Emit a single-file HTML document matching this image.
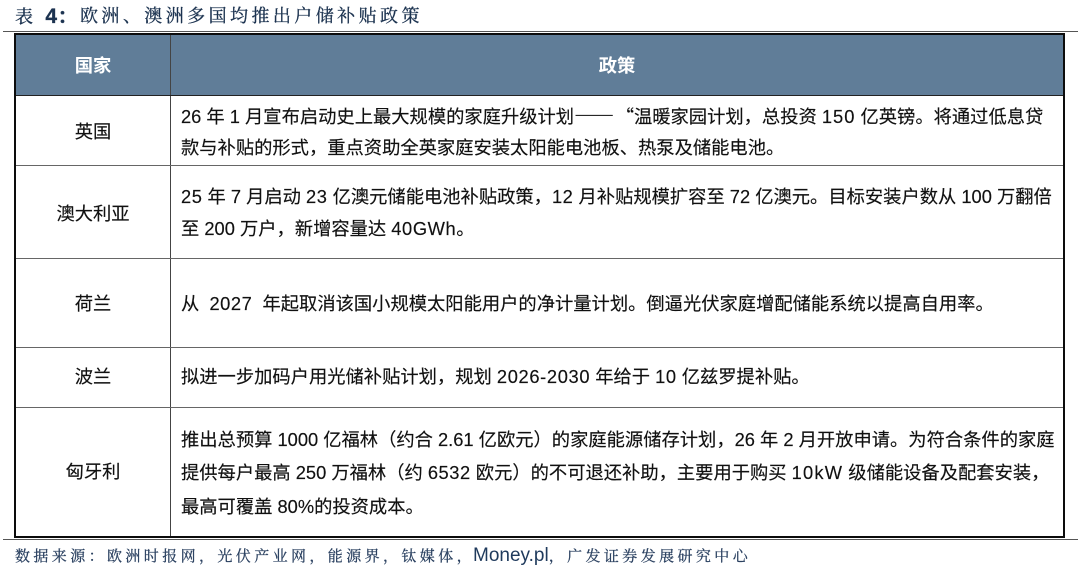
<!DOCTYPE html>
<html lang="zh"><head><meta charset="utf-8"><style>
html,body{margin:0;padding:0;background:#fff}
#p{position:relative;width:1080px;height:573px;overflow:hidden;background:#fff}
.r{position:absolute;box-sizing:border-box}
.t{position:absolute;white-space:nowrap;font-family:"Liberation Sans","Noto Sans CJK SC",sans-serif;font-size:18.3px;line-height:26px;height:26px;color:#111;-webkit-text-stroke:0.15px #111}
.c{text-align:center;width:154px;left:16px}
.s{position:absolute;white-space:nowrap;font-family:"Liberation Serif","Noto Serif CJK SC",serif;color:#1c3350;-webkit-text-stroke:0.3px #1c3350}
.z{font-family:"Noto Sans CJK SC",sans-serif}
.w{color:#fff;font-weight:700;-webkit-text-stroke:0}
i{font-style:normal;letter-spacing:.55px}
</style></head><body><div id="p">
<div class="s" style="left:15px;top:2px;font-size:18px;line-height:28px;letter-spacing:3.4px">表 <b style="font-family:'Liberation Sans',sans-serif;letter-spacing:0;font-size:21px;margin-left:1px">4</b><b class="z" style="margin-left:1px">&#65306;</b></div>
<div class="s" style="left:80px;top:2px;font-size:18px;line-height:28px;letter-spacing:3.43px">欧洲、澳洲多国均推出户储补贴政策</div>
<div class="r" style="left:3px;top:31px;width:1075px;height:1px;background:#555"></div>
<div class="r" style="left:14px;top:33px;width:1051px;height:505px;border:2px solid #0c0c0c"></div>
<div class="r" style="left:16px;top:35px;width:1047px;height:60px;background:#607d98"></div>
<div class="r" style="left:170px;top:35px;width:1px;height:501px;background:#444"></div>
<div class="r" style="left:16px;top:95px;width:1047px;height:1px;background:#222"></div>
<div class="r" style="left:16px;top:165px;width:1047px;height:1px;background:#666"></div>
<div class="r" style="left:16px;top:258px;width:1047px;height:1px;background:#666"></div>
<div class="r" style="left:16px;top:347px;width:1047px;height:1px;background:#666"></div>
<div class="r" style="left:16px;top:407px;width:1047px;height:1px;background:#666"></div>
<div class="r" style="left:3px;top:539px;width:1075px;height:1px;background:#555"></div>
<div class="t c w" style="top:53px">国家</div>
<div class="t w" style="left:171px;width:892px;text-align:center;top:53px">政策</div>
<div class="t c" style="top:119px">英国</div>
<div class="t c" style="top:201px">澳大利亚</div>
<div class="t c" style="top:291px">荷兰</div>
<div class="t c" style="top:364px">波兰</div>
<div class="t c" style="top:459px">匈牙利</div>
<div class="t" style="left:181px;top:102px">26 年 1 月宣布启动史上最大规模的家庭升级计划<span class="z" style="font-size:20px">——</span><span class="z" style="margin-left:1.6px">“</span>温暖家园计划&#65292;总投资 <i style="letter-spacing:1px">150</i> 亿英镑。将通过低息贷</div>
<div class="t" style="left:181px;top:135px">款与补贴的形式&#65292;重点资助全英家庭安装太阳能电池板、热泵及储能电池。</div>
<div class="t" style="left:181px;top:184px"><i>25</i> 年 7 月启动 <i>23</i> 亿澳元储能电池补贴政策&#65292;<i>12</i> 月补贴规模扩容至 72 亿澳元。目标安装户数从 100 万翻倍</div>
<div class="t" style="left:181px;top:216px">至 200 万户&#65292;新增容量达 <i style="letter-spacing:.6px">40GWh</i>。</div>
<div class="t" style="left:181px;top:291px">从&nbsp; <i>2027</i>&nbsp; 年起取消该国小规模太阳能用户的净计量计划。倒逼光伏家庭增配储能系统以提高自用率。</div>
<div class="t" style="left:181px;top:364px">拟进一步加码户用光储补贴计划&#65292;规划 <i style="letter-spacing:.65px">2026-2030</i> 年给于 <i>10</i> 亿兹罗提补贴。</div>
<div class="t" style="left:181px;top:427px">推出总预算 1000 亿福林&#65288;约合 2.61 亿欧元&#65289;的家庭能源储存计划&#65292;26 年 2 月开放申请。为符合条件的家庭</div>
<div class="t" style="left:181px;top:460px">提供每户最高 250 万福林&#65288;约 <i>6532</i> 欧元&#65289;的不可退还补助&#65292;主要用于购买 <i style="letter-spacing:1.2px">10kW</i> 级储能设备及配套安装&#65292;</div>
<div class="t" style="left:181px;top:494px">最高可覆盖 80%的投资成本。</div>
<div class="s" style="left:15px;top:545px;font-size:15px;line-height:22px;letter-spacing:3.4px;color:#2a4060;-webkit-text-stroke:0.25px #2a4060">数据来源&#65306;欧洲时报网&#65292;光伏产业网&#65292;能源界&#65292;钛媒体&#65292;<span style="font-family:'Liberation Sans',sans-serif;font-size:19px;letter-spacing:0;color:#1f3a5c;-webkit-text-stroke:0;margin-left:-2px">Money.pl</span>&#65292;广发证券发展研究中心</div>
</div></body></html>
